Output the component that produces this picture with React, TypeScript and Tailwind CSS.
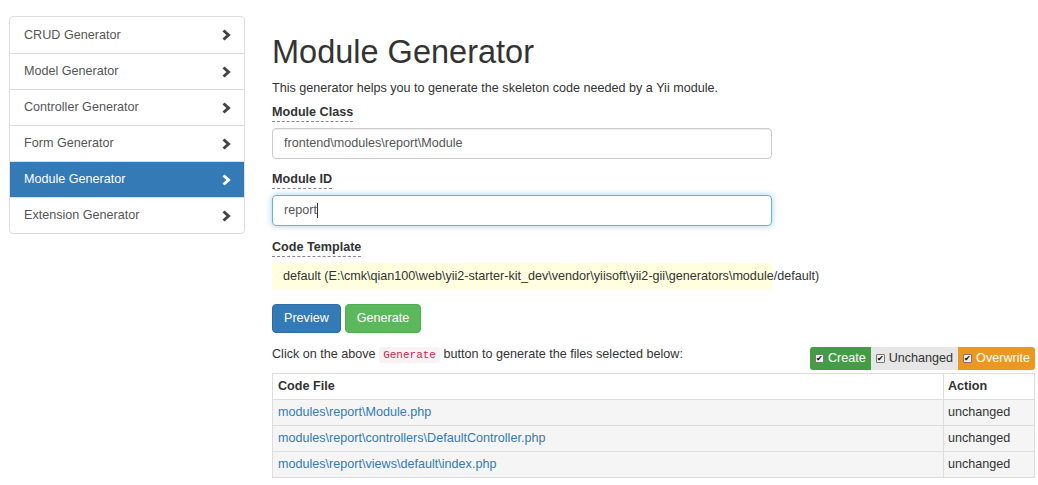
import React from 'react';

const generators = [
  'CRUD Generator',
  'Model Generator',
  'Controller Generator',
  'Form Generator',
  'Module Generator',
  'Extension Generator',
];

const files = [
  'modules\\report\\Module.php',
  'modules\\report\\controllers\\DefaultController.php',
  'modules\\report\\views\\default\\index.php',
];

const Chevron = ({ active }: { active: boolean }) => (
  <svg width="10" height="12" viewBox="0 0 10 12" className={active ? 'text-white' : 'text-[#444]'}>
    <path d="M2.5 1.5 L7.5 6 L2.5 10.5" fill="none" stroke="currentColor" strokeWidth="3" strokeLinejoin="miter" />
  </svg>
);

const Check = () => (
  <span className="inline-flex items-center justify-center w-[9px] h-[9px] bg-[#eee] border border-[#777] rounded-[1px] mr-[4px] text-[8px] leading-none text-black">
    ✔
  </span>
);

const FieldLabel = ({ children }: { children: React.ReactNode }) => (
  <div className="inline-block font-bold text-[#333] border-b border-dashed border-[#888] leading-[16px] pb-[1px]">{children}</div>
);

const App: React.FC = () => {
  return (
    <div className="w-[1038px] h-[485px] overflow-hidden bg-white text-[12.6px] text-[#333] font-['Liberation_Sans',Arial,sans-serif] flex">
      <div className="w-[272px] pl-[9px] pt-[16px] shrink-0">
        <div className="w-[236px] border border-[#ddd] rounded-[4px] overflow-hidden">
          {generators.map((g, i) => {
            const active = g === 'Module Generator';
            return (
              <div
                key={g}
                className={`h-9 flex items-center justify-between pl-[14px] pr-[13px] ${i > 0 ? 'border-t border-[#ddd]' : ''} ${
                  active ? 'bg-[#337ab7] text-white' : 'text-[#555]'
                }`}
              >
                <span>{g}</span>
                <Chevron active={active} />
              </div>
            );
          })}
        </div>
      </div>

      <div className="flex-1 pr-[4px]">
        <h1 className="text-[32.5px] leading-[40px] text-[#333] mt-[32px] mb-[7px]">Module Generator</h1>
        <p className="leading-[18px] mb-[6px]">This generator helps you to generate the skeleton code needed by a Yii module.</p>

        <FieldLabel>Module Class</FieldLabel>
        <div className="mt-[6px] w-[500px] h-[31px] border border-[#ccc] rounded-[4px] flex items-center px-[11px] text-[#555] shadow-[inset_0_1px_1px_rgba(0,0,0,0.075)]">
          frontend\modules\report\Module
        </div>

        <div className="mt-[11px]">
          <FieldLabel>Module ID</FieldLabel>
        </div>
        <div className="mt-[6px] w-[500px] h-[31px] border border-[#66afe9] rounded-[4px] flex items-center px-[11px] text-[#555] shadow-[0_0_6px_rgba(102,175,233,0.6)]">
          report<span className="inline-block w-px h-[15px] bg-[#333]" />
        </div>

        <div className="mt-[12px]">
          <FieldLabel>Code Template</FieldLabel>
        </div>
        <div className="mt-[6px] w-[500px] h-[26px] bg-[#ffffe0] flex items-center pl-[11px] whitespace-nowrap overflow-visible">
          default (E:\cmk\qian100\web\yii2-starter-kit_dev\vendor\yiisoft\yii2-gii\generators\module/default)
        </div>

        <div className="mt-[15px] flex gap-[4px]">
          <button className="h-[29px] px-[11px] rounded-[4px] bg-[#337ab7] border border-[#2e6da4] text-white">Preview</button>
          <button className="h-[29px] px-[11px] rounded-[4px] bg-[#5cb85c] border border-[#4cae4c] text-white">Generate</button>
        </div>

        <div className="mt-[12px] flex items-end justify-between">
          <div className="pb-[6px] leading-[18px]">
            Click on the above{' '}
            <code className="font-['Liberation_Mono',monospace] text-[11px] text-[#c7254e] bg-[#f9f2f4] px-[4px] py-[2px] rounded-[3px]">Generate</code>{' '}
            button to generate the files selected below:
          </div>
          <div className="flex h-[23px] text-[12.6px] rounded-[3px] overflow-hidden">
            <div className="flex items-center px-[5px] bg-[#449d44] text-white">
              <Check />Create
            </div>
            <div className="flex items-center px-[5px] bg-[#e6e6e6] text-[#333]">
              <Check />Unchanged
            </div>
            <div className="flex items-center px-[5px] bg-[#ec971f] text-white">
              <Check />Overwrite
            </div>
          </div>
        </div>

        <table className="mt-[3px] w-[763px] border-collapse border border-[#ddd]">
          <thead>
            <tr className="h-[26px]">
              <th className="text-left font-bold border border-[#ddd] pl-[5px]">Code File</th>
              <th className="text-left font-bold border border-[#ddd] pl-[4px] w-[91px]">Action</th>
            </tr>
          </thead>
          <tbody>
            {files.map((f) => (
              <tr key={f} className="h-[26px] bg-[#f5f5f5]">
                <td className="border border-[#ddd] pl-[5px] text-[#337ab7]">{f}</td>
                <td className="border border-[#ddd] pl-[4px]">unchanged</td>
              </tr>
            ))}
          </tbody>
        </table>
      </div>
    </div>
  );
};

export default App;
